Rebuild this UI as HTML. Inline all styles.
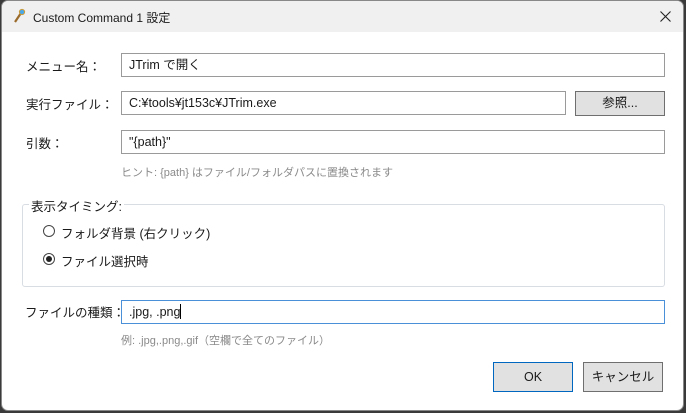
<!DOCTYPE html>
<html><head><meta charset="utf-8"><style>
*{box-sizing:border-box;margin:0;padding:0}
body{width:686px;height:413px;background:#3a3a3a;overflow:hidden;font-family:"Segoe UI","Liberation Sans","Noto Sans CJK JP",sans-serif;font-size:12px;color:#1a1a1a;position:relative}
.win{position:absolute;left:1px;top:0;width:683px;height:411px;background:#fff;border-radius:7px;overflow:hidden;border:1px solid #888}
.title{height:31px;background:#f0f0f0;position:relative}
.tt{position:absolute;left:31px;top:8px;font-size:12px}
.abs{position:absolute}
.inp{position:absolute;border:1px solid #9a9a9a;background:#fff;padding:0 0 0 7px;height:24px;line-height:22px;font-size:12.5px}
.lbl{position:absolute;left:26px;font-size:12.5px;line-height:16px}
.btn{position:absolute;background:#e1e1e1;border:1px solid #6f6f6f;text-align:center;font-size:12.5px}
.hint{position:absolute;left:121px;font-size:11px;color:#8a8a8a}
.rad{position:absolute;width:12px;height:12px;border:1px solid #444;border-radius:50%;background:#fff}
</style></head><body>
<div class="win">
<div class="title">
<svg class="abs" style="left:10px;top:7px" width="14" height="16" viewBox="0 0 14 16"><line x1="3" y1="14" x2="9" y2="5" stroke="#9a6a2a" stroke-width="2.2"/><circle cx="10" cy="4" r="2.6" fill="#4aa8e8" stroke="#c99a3a" stroke-width="1"/></svg>
<span class="tt">Custom Command 1 設定</span>
<svg class="abs" style="left:658px;top:10px" width="11" height="11" viewBox="0 0 11 11"><path d="M0.5 0.5L10.5 10.5M10.5 0.5L0.5 10.5" stroke="#222" stroke-width="1.1"/></svg>
</div>
</div>
<div class="lbl" style="top:59px">メニュー名：</div>
<div class="inp" style="left:121px;top:53px;width:544px">JTrim で開く</div>
<div class="lbl" style="top:97px">実行ファイル：</div>
<div class="inp" style="left:121px;top:91px;width:445px">C:¥tools¥jt153c¥JTrim.exe</div>
<div class="btn" style="left:575px;top:91px;width:90px;height:25px;line-height:23px">参照...</div>
<div class="lbl" style="top:136px">引数：</div>
<div class="inp" style="left:121px;top:130px;width:544px">"{path}"</div>
<div class="hint" style="top:164px">ヒント: {path} はファイル/フォルダパスに置換されます</div>
<div class="abs" style="left:22px;top:204px;width:643px;height:83px;border:1px solid #d8dde3;border-radius:3px"></div>
<div class="abs" style="left:29px;top:196px;background:#fff;padding:0 2px;font-size:12.5px">表示タイミング:</div>
<div class="rad" style="left:43px;top:225px"></div>
<div class="abs" style="left:61px;top:223px;font-size:12.5px">フォルダ背景 (右クリック)</div>
<div class="rad" style="left:43px;top:253px"><div style="position:absolute;left:2px;top:2px;width:6px;height:6px;border-radius:50%;background:#222"></div></div>
<div class="abs" style="left:61px;top:251px;font-size:12.5px">ファイル選択時</div>
<div class="lbl" style="left:25px;top:305px">ファイルの種類：</div>
<div class="inp" style="left:121px;top:300px;width:544px;border-color:#4a90d9">.jpg, .png<span style="display:inline-block;width:1px;height:15px;background:#000;vertical-align:-3px"></span></div>
<div class="hint" style="top:332px">例: .jpg,.png,.gif（空欄で全てのファイル）</div>
<div class="btn" style="left:493px;top:362px;width:80px;height:30px;line-height:28px;border-color:#0067c0">OK</div>
<div class="btn" style="left:583px;top:362px;width:80px;height:30px;line-height:28px">キャンセル</div>
</body></html>
